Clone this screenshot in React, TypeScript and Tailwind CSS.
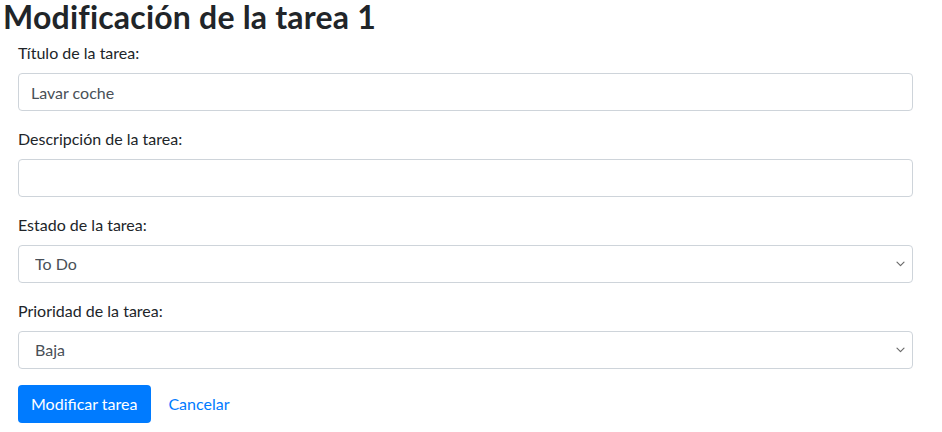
import React from "react";

const Chevron = () => (
  <svg className="pointer-events-none absolute right-[8px] top-1/2 -translate-y-1/2" width="9" height="6" viewBox="0 0 9 6" fill="none">
    <path d="M1 1.2l3.5 3.5 3.5-3.5" stroke="#6b6b6b" strokeWidth="1.2" strokeLinecap="round" strokeLinejoin="round" />
  </svg>
);

const Label = ({ children }: { children: React.ReactNode }) => (
  <label className="block h-[24px] leading-[24px] mb-[8px] text-[16px] text-[#212529]">{children}</label>
);

export default function App() {
  return (
    <div className="w-[942px] h-[432px] bg-white overflow-hidden" style={{ fontFamily: '"Segoe UI", Lato, "Open Sans", sans-serif' }}>
      <h1 className="pl-[3px] text-[32px] leading-[34px] tracking-[0.2px] font-bold text-[#212529] mb-[7px]">
        Modificación de la tarea 1
      </h1>
      <form className="ml-[18px] w-[895px]">
        <div className="mb-[16px]">
          <Label>Título de la tarea:</Label>
          <input
            defaultValue="Lavar coche"
            className="block w-full h-[38px] px-[12px] border border-[#ced4da] rounded-[4px] text-[16px] text-[#495057] outline-none"
          />
        </div>
        <div className="mb-[16px]">
          <Label>Descripción de la tarea:</Label>
          <input className="block w-full h-[38px] px-[12px] border border-[#ced4da] rounded-[4px] text-[16px] text-[#495057] outline-none" />
        </div>
        <div className="mb-[16px]">
          <Label>Estado de la tarea:</Label>
          <div className="relative">
            <select className="block w-full h-[38px] pl-[16px] pr-[28px] border border-[#ced4da] rounded-[4px] text-[16px] text-[#495057] bg-white appearance-none outline-none">
              <option>To Do</option>
            </select>
            <Chevron />
          </div>
        </div>
        <div className="mb-[16px]">
          <Label>Prioridad de la tarea:</Label>
          <div className="relative">
            <select className="block w-full h-[38px] pl-[16px] pr-[28px] border border-[#ced4da] rounded-[4px] text-[16px] text-[#495057] bg-white appearance-none outline-none">
              <option>Baja</option>
            </select>
            <Chevron />
          </div>
        </div>
        <div className="flex items-center gap-[4px]">
          <button type="button" className="h-[38px] pl-[13px] pr-[14px] bg-[#007bff] text-white text-[16px] rounded-[4px]">
            Modificar tarea
          </button>
          <button type="button" className="h-[38px] px-[13px] text-[#007bff] text-[16px]">
            Cancelar
          </button>
        </div>
      </form>
    </div>
  );
}
